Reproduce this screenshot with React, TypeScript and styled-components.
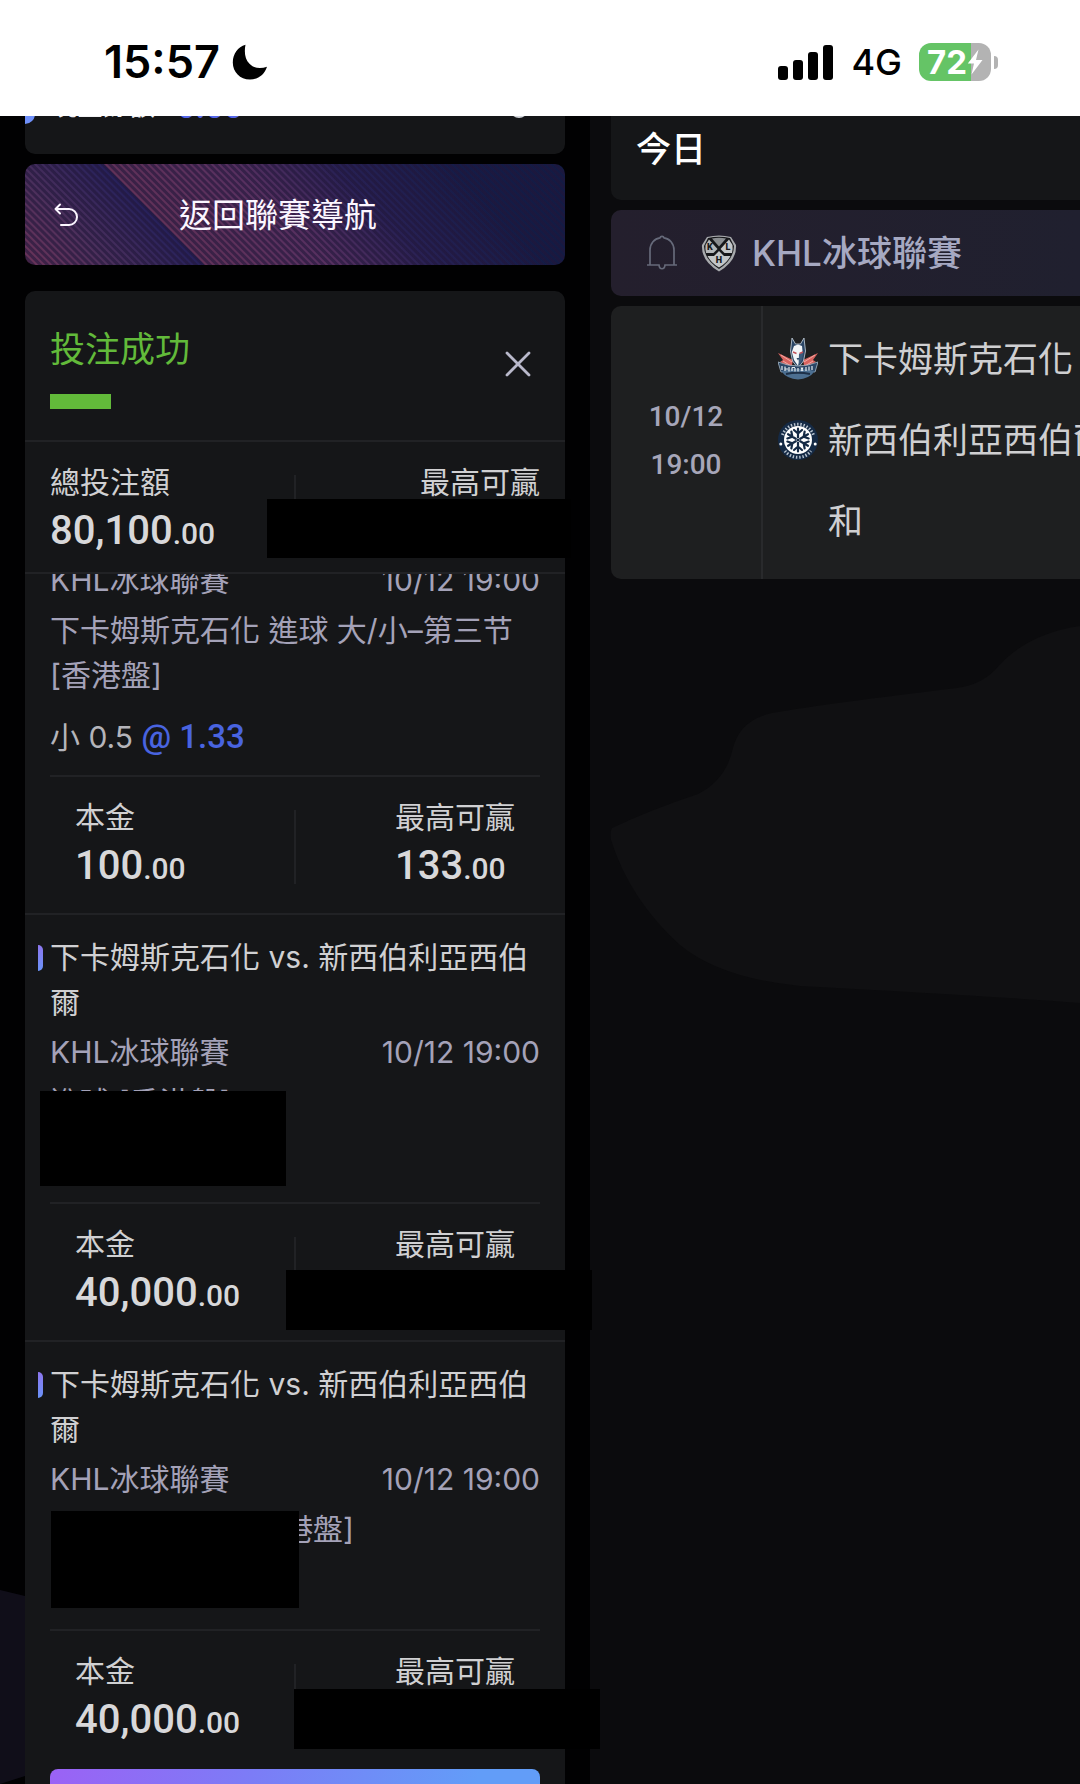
import React from "react";
import styled, { createGlobalStyle } from "styled-components";

const SANS = `Inter, "Noto Sans CJK TC", sans-serif`;
const NUM = `Roboto, "Noto Sans CJK TC", sans-serif`;

const Global = createGlobalStyle`
  *, *::before, *::after { box-sizing: border-box; }
  body { margin: 0; background: #010102; }
  h1, h2, h3, p, ul { margin: 0; padding: 0; font: inherit; }
  ul { list-style: none; }
  button { border: 0; padding: 0; background: none; font: inherit; color: inherit; cursor: pointer; }
  svg { flex: none; }
`;

const Page = styled.div`
  display: flex;
  flex-direction: column;
  height: 100vh;
  overflow: hidden;
  font-family: ${SANS};
  font-weight: 400;
  font-size: 30px;
  color: #d0d0d2;
`;

/* Status bar */
const StatusBar = styled.header`
  flex: none;
  display: flex;
  align-items: center;
  justify-content: space-between;
  height: 116px;
  padding: 8px 82px 0 104px;
  background: #fff;
  color: #000;
`;
const StatusGroup = styled.div<{ $gap: number }>`
  display: flex;
  align-items: center;
  gap: ${(p) => p.$gap}px;
`;
const Clock = styled.time`
  font-size: 45px;
  font-weight: 600;
  line-height: 48px;
`;
const Network = styled.span`
  font-size: 36px;
  font-weight: 500;
  line-height: 48px;
`;
const Battery = styled.div`
  display: flex;
  align-items: center;
  gap: 3px;
`;
const BatteryBody = styled.div`
  display: flex;
  align-items: center;
  justify-content: center;
  width: 72px;
  height: 38px;
  border-radius: 12px;
  background: linear-gradient(90deg, #65c466 72%, #b3b3b3 72%);
  color: #fff;
  font-size: 33px;
  font-weight: 700;
  line-height: 38px;
`;
const BatteryNub = styled.span`
  width: 4px;
  height: 13px;
  border-radius: 0 6px 6px 0;
  background: #b3b3b3;
`;

/* Panes */
const Main = styled.main`
  flex: 1;
  min-height: 0;
  display: grid;
  grid-template-columns: minmax(0, 59fr) minmax(0, 49fr);
`;
const SlipPane = styled.section`
  position: relative;
  z-index: 1;
  padding: 0 25px;
  background: #010102;
  min-height: 0;
`;
const MatchPane = styled.section`
  position: relative;
  overflow: hidden;
  padding-left: 21px;
  background: #0b0b0d;
  display: flex;
  flex-direction: column;
  gap: 10px;
`;
const PaneShape = styled.svg<{ $top: number }>`
  position: absolute;
  left: 0;
  top: ${(p) => p.$top}px;
  pointer-events: none;
`;

/* Balance strip, scrolled mostly out of view */
const Clip = styled.div`
  overflow: hidden;
`;
const BalanceCard = styled.div`
  position: relative;
  display: flex;
  align-items: flex-end;
  gap: 22px;
  margin-top: -40px;
  height: 78px;
  padding: 0 37px 29px 26px;
  border-radius: 0 0 10px 10px;
  background: #151618;
  overflow: hidden;
  font-size: 26px;
  line-height: 38px;
  font-weight: 500;
  color: #f2f2f4;
`;
const BalanceValue = styled.span`
  flex: 1;
  color: #5566e8;
  font-size: 33px;
  line-height: 36px;
  font-weight: 600;
  font-family: ${NUM};
`;
const BalanceDot = styled.span`
  position: absolute;
  left: -10px;
  bottom: 30px;
  width: 20px;
  height: 20px;
  border-radius: 50%;
  background: #6f90fa;
`;
const RefreshDot = styled.span`
  width: 18px;
  height: 18px;
  margin-bottom: 7px;
  border-radius: 50%;
  background: #d3d6dc;
`;

const BackButton = styled.button`
  display: flex;
  align-items: center;
  gap: 101px;
  width: 100%;
  height: 101px;
  margin-top: 10px;
  padding: 0 29px;
  border-radius: 10px;
  color: #fbf6ff;
  font-size: 33px;
  line-height: 48px;
  background:
    repeating-linear-gradient(45deg, rgba(33, 22, 58, 0.6) 0 2px, rgba(33, 22, 58, 0) 3px 4px, rgba(33, 22, 58, 0.6) 5px),
    linear-gradient(45deg, #6c3358 0, #4a2f5c 14%, #25205a 28%, #613158 28%, #573060 48%, rgba(46, 34, 88, 0.7) 64%, rgba(20, 26, 66, 0) 82%),
    linear-gradient(90deg, #1d1f55 0, #131b44 100%);
`;

/* Slip card */
const SlipCard = styled.section`
  margin-top: 26px;
  border-radius: 10px 10px 0 0;
  background: #151618;
`;
const SlipHead = styled.div`
  display: flex;
  align-items: center;
  justify-content: space-between;
  height: 149px;
  padding: 2px 34px 0 25px;
`;
const SlipTitle = styled.h1`
  color: #62ba3a;
  font-size: 35px;
  line-height: 50px;
  &::after {
    content: "";
    display: block;
    width: 61px;
    height: 15px;
    margin-top: 20px;
    background: #62ba3a;
  }
`;
const CloseButton = styled.button`
  display: flex;
  padding-bottom: 6px;
`;
const Totals = styled.div<{ $inset?: boolean }>`
  position: relative;
  display: grid;
  grid-template-columns: minmax(0, 1fr) 2px minmax(0, 1fr);
  padding: ${(p) => (p.$inset ? "20px 25px 22px" : "20px 25px 16px")};
  border-top: 2px solid #212225;
  border-bottom: ${(p) => (p.$inset ? "0" : "2px solid #212225")};
`;
const TotalsRule = styled.span`
  height: 74px;
  margin-top: 13px;
  background: #212225;
`;
const Figure = styled.div<{ $end?: boolean }>`
  display: flex;
  flex-direction: column;
  gap: 7px;
  width: max-content;
  min-width: 120px;
  min-height: 91px;
  justify-self: ${(p) => (p.$end ? "end" : "start")};
`;
const FigureLabel = styled.span`
  line-height: 40px;
`;
const Amount = styled.span`
  font-family: ${NUM};
  font-size: 40px;
  font-weight: 500;
  line-height: 44px;
  color: #d8d8da;
  small { font-size: 30px; font-weight: 500; }
`;

const TicketWindow = styled.div`
  display: flow-root;
  overflow-x: visible;
  overflow-y: clip;
`;
const TicketList = styled.ul`
  margin-top: -41px;
`;
const Ticket = styled.li`
  position: relative;
  padding-top: 20px;
  border-bottom: 2px solid #212225;
  &:last-child { border-color: transparent; }
`;
const TicketBody = styled.div`
  padding: 0 25px 16px;
  line-height: 45px;
  color: #a4a2b8;
`;
const TicketTitle = styled.h2`
  position: relative;
  color: #d0d0d2;
  &::before {
    content: "";
    position: absolute;
    left: -12px;
    top: 10px;
    width: 5px;
    height: 26px;
    border-radius: 0 5px 5px 0;
    background: linear-gradient(#8d76ee, #6a93f8);
  }
`;
const LeagueRow = styled.div`
  display: flex;
  justify-content: space-between;
  margin-top: 5px;
`;
const Market = styled.p<{ $indent?: boolean }>`
  margin-top: 5px;
  padding-left: ${(p) => (p.$indent ? "233px" : "0")};
`;
const Selection = styled.p`
  height: 45px;
  margin-top: 16px;
  color: #b4b4ba;
`;
const Odds = styled.b`
  color: #4964e0;
  font-family: ${NUM};
  font-size: 33px;
  font-weight: 500;
`;
const StakeWrap = styled.div`
  margin: 0 25px;
`;
const Redaction = styled.span<{ $x: number; $y: number; $w: number; $h: number }>`
  position: absolute;
  left: ${(p) => p.$x}px;
  top: ${(p) => p.$y}px;
  width: ${(p) => p.$w}px;
  height: ${(p) => p.$h}px;
  background: #000;
`;
const Confirm = styled.button`
  display: block;
  width: calc(100% - 50px);
  height: 88px;
  margin: 0 25px;
  border-radius: 8px;
  background: linear-gradient(100deg, #9b62f5 0, #7c7cf6 40%, #629df8 85%);
`;

/* Match pane */
const DayBar = styled.h2`
  position: relative;
  height: 84px;
  padding: 9px 25px;
  border-radius: 0 0 0 10px;
  background: #151618;
  color: #fff;
  font-size: 35px;
  font-weight: 500;
  line-height: 48px;
`;
const LeagueBar = styled.div`
  position: relative;
  display: flex;
  align-items: center;
  height: 86px;
  padding-left: 36px;
  border-radius: 10px 0 0 10px;
  background: linear-gradient(90deg, #241f2d, #20202f);
  color: #a6a9c2;
  font-size: 35px;
  font-weight: 500;
  white-space: nowrap;
`;
const BellButton = styled.button`
  display: flex;
  margin-right: 24px;
`;
const LeagueName = styled.h3`
  margin-left: 15px;
  line-height: 48px;
`;
const MatchCard = styled.article`
  position: relative;
  display: grid;
  grid-template-columns: 150px minmax(0, 1fr);
  border-radius: 10px 0 0 10px;
  background: #1e1f20;
`;
const Kickoff = styled.time`
  display: flex;
  flex-direction: column;
  justify-content: center;
  align-items: center;
  padding-bottom: 4px;
  font-family: ${NUM};
  font-size: 28px;
  font-weight: 500;
  line-height: 48px;
  color: #a6a6b9;
`;
const Teams = styled.div`
  padding: 12px 0 18px 15px;
  border-left: 2px solid #292a2c;
`;
const Team = styled.div`
  display: grid;
  grid-template-columns: 40px max-content;
  column-gap: 10px;
  align-items: center;
  height: 81px;
  font-size: 35px;
  line-height: 48px;
  color: #cfcfd1;
`;
const TeamName = styled.span`
  grid-column: 2;
`;

const Moon = () => (
  <svg width="36" height="36" viewBox="0 0 36 36" aria-hidden="true">
    <path d="M13.500 .8C12 8 13 15.500 17.500 19.800C22 24.500 28.500 25 35 22.800C32.500 30.800 26 35.500 18 35.500C8 35.500 .8 28 .8 18.500C.8 10 5.800 3 13.500 .8Z" fill="#000" />
  </svg>
);
const Signal = () => (
  <svg width="56" height="35" viewBox="0 0 56 35" aria-hidden="true">
    <rect x="0" y="21" width="10" height="14" rx="3" />
    <rect x="15" y="15" width="10" height="20" rx="3" />
    <rect x="30" y="7" width="10" height="28" rx="3" />
    <rect x="45" y="0" width="10" height="35" rx="3" />
  </svg>
);
const Bolt = () => (
  <svg width="16" height="26" viewBox="0 0 16 26" aria-hidden="true">
    <path d="M11.500 .5L.8 14.500H7L4.500 25.500L15.500 11H9Z" fill="#fff" />
  </svg>
);
const Undo = () => (
  <svg width="24" height="24" viewBox="0 0 24 24" fill="none" stroke="currentColor" strokeWidth="2" strokeLinecap="round" strokeLinejoin="round" aria-hidden="true">
    <path d="M6 1.500L1.500 6L6 10.500M1.500 6H15A8 8 0 0 1 15 22H7" />
  </svg>
);
const Cross = () => (
  <svg width="26" height="26" viewBox="0 0 26 26" stroke="#b9b9cb" strokeWidth="2.800" strokeLinecap="round" aria-hidden="true">
    <path d="M2 2L24 24M24 2L2 24" />
  </svg>
);
const Bell = () => (
  <svg width="30" height="36" viewBox="0 0 30 36" fill="none" stroke="#666a7a" strokeWidth="1.700" aria-hidden="true">
    <path d="M3 29.500V15C3 8.500 7.500 3.500 13 2.800C13.500 1 16.500 1 17 2.800C22.500 3.500 27 8.500 27 15V29.500M0 30H12C12.500 35 17.500 35 18 30H30" />
  </svg>
);
const KhlShield = () => (
  <svg width="36" height="37" viewBox="0 0 36 37" fontFamily="Roboto, sans-serif" fontWeight="900" fontSize="9" textAnchor="middle" role="img" aria-label="KHL">
    <path d="M6 2Q18 -1 30 2L35 10Q36 26 18 36.500Q0 26 1 10Z" fill="#a9abae" />
    <path d="M7 3Q18 .5 29 3L33 11Q33 24 18 34Q3 24 3 11Z" fill="#16171a" />
    <path d="M8 4.500L16.500 14L12.500 18H5Q4 14 4.500 10Z" fill="#b4b7b9" />
    <path d="M28 4.500L19.500 14L23.500 18H31Q32 14 31.500 10Z" fill="#c3c6c8" />
    <path d="M11 3.500L18 11.500L25 3.500Q18 2 11 3.500Z" fill="#8b8e91" />
    <path d="M6.500 21H13L18 16L23 21H29.500Q26 28 18 32.500Q10 28 6.500 21Z" fill="#c3c6c8" />
    <text x="9" y="15" fill="#16171a">K</text>
    <text x="27" y="15" fill="#16171a">L</text>
    <text x="18" y="28" fill="#16171a">H</text>
  </svg>
);
const WolfCrest = () => (
  <svg width="40" height="42" viewBox="0 0 40 42" role="img" aria-label="下卡姆斯克石化">
    <path d="M0 15L15 22L13 32L5 30L7 26L2 24L5 22Z" fill="#d9635f" />
    <path d="M40 15L25 22L27 32L35 30L33 26L38 24L35 22Z" fill="#d9635f" />
    <path d="M3 17L14 24M37 17L26 24M5 23L13 28M35 23L27 28" stroke="#f0aaa4" strokeWidth="1" />
    <path d="M14 0L17.500 6H22.500L26 0L27.500 13L25.500 23L20 30L14.500 23L12.500 13Z" fill="#2b4666" stroke="#c9d6e0" strokeWidth=".8" />
    <path d="M16 8L20 6.500L24 8L24.500 13L22 22L20 28L16 22L13.800 14Z" fill="#f2f5f7" />
    <path d="M21 16L25.500 13L24 22L20.500 28Z" fill="#3d5c7c" />
    <path d="M15 14L18.500 15.500M21.500 15.500L25 14" stroke="#c05058" strokeWidth="1.400" />
    <path d="M18.500 20H21.500L20 22.500Z" fill="#2b4666" />
    <path d="M0 24Q20 32 40 24L37 34Q20 30 3 34Z" fill="#2b4666" stroke="#a9bccb" strokeWidth=".8" />
    <path d="M3 33Q20 29 37 33Q31 41 20 41.500Q9 41 3 33Z" fill="#4c6f91" />
    <path d="M8 36Q20 33.500 32 36" stroke="#1d3048" strokeWidth="2" fill="none" />
    <path d="M4 28V32M7 28.500V33M7 31H10M11 29V33.500M14 29.500V33M14 29.500H17M17 30V33.500M20 30V33.500M23 29.500L25 33M25 29.500L23 33M28 29V33M31 28.500V32.500M34 28V32" stroke="#e6edf2" strokeWidth="1.200" />
  </svg>
);
const SnowCrest = () => (
  <svg width="40" height="40" viewBox="0 0 40 40" role="img" aria-label="新西伯利亞西伯爾">
    <circle cx="20" cy="20" r="20" fill="#152a45" />
    <path d="M4.500 15A16.500 16.500 0 0 1 35.500 15" fill="none" stroke="#b9c4d0" strokeWidth="3" strokeDasharray="1.400 1.800" />
    <path d="M7 31A16.500 16.500 0 0 0 33 31" fill="none" stroke="#b9c4d0" strokeWidth="3" strokeDasharray="1.400 1.800" />
    <circle cx="20" cy="20" r="14" fill="#fff" />
    <circle cx="2.800" cy="24" r="1.500" fill="#fff" />
    <circle cx="37.200" cy="24" r="1.500" fill="#fff" />
    {[0, 60, 120, 180, 240, 300].map((angle) => (
      <path key={angle} transform={`rotate(${angle} 20 20)`} d="M20 17.500V8.500M20 13.500L16 10M20 13.500L24 10" stroke="#152a45" strokeWidth="2.200" strokeLinecap="round" fill="none" />
    ))}
    <circle cx="20" cy="20" r="1.300" fill="#152a45" />
  </svg>
);

const Money = ({ whole }: { whole: string }) => (
  <Amount>
    {whole}
    <small>.00</small>
  </Amount>
);

type Box = [number, number, number, number];
type TicketData = {
  title?: string;
  market: string;
  indent?: boolean;
  pick?: string;
  odds?: string;
  stake: string;
  win?: string;
  masks: Box[];
};

const FIXTURE = "下卡姆斯克石化 vs. 新西伯利亞西伯爾";

const tickets: TicketData[] = [
  { market: "下卡姆斯克石化 進球 大/小–第三节 [香港盤]", pick: "小 0.5", odds: "@ 1.33", stake: "100", win: "133", masks: [] },
  { title: FIXTURE, market: "進球 [香港盤]", stake: "40,000", masks: [[15, 176, 246, 95], [261, 355, 306, 60]] },
  { title: FIXTURE, market: "港盤]", indent: true, stake: "40,000", masks: [[26, 169, 248, 97], [269, 347, 306, 60]] },
];

const Mask = ({ box: [x, y, w, h] }: { box: Box }) => <Redaction $x={x} $y={y} $w={w} $h={h} />;

export default function App() {
  return (
    <Page lang="zh-Hant">
      <Global />
      <StatusBar>
        <StatusGroup $gap={12}>
          <Clock>15:57</Clock>
          <Moon />
        </StatusGroup>
        <StatusGroup $gap={17}>
          <Signal />
          <Network>4G</Network>
          <Battery>
            <BatteryBody>
              72
              <Bolt />
            </BatteryBody>
            <BatteryNub />
          </Battery>
        </StatusGroup>
      </StatusBar>

      <Main>
        <SlipPane>
          <PaneShape $top={1474} width="25" height="194" viewBox="0 0 25 194" aria-hidden="true">
            <path d="M0 0L25 6V186L0 194Z" fill="#100e19" />
          </PaneShape>
          <Clip>
            <BalanceCard>
              <BalanceDot />
              <span>現金餘額</span>
              <BalanceValue>0.00</BalanceValue>
              <RefreshDot />
            </BalanceCard>
          </Clip>
          <BackButton type="button">
            <Undo />
            返回聯賽導航
          </BackButton>

          <SlipCard>
            <SlipHead>
              <SlipTitle>投注成功</SlipTitle>
              <CloseButton type="button" aria-label="關閉">
                <Cross />
              </CloseButton>
            </SlipHead>
            <Totals>
              <Figure>
                <FigureLabel>總投注額</FigureLabel>
                <Money whole="80,100" />
              </Figure>
              <TotalsRule />
              <Figure $end>
                <FigureLabel>最高可贏</FigureLabel>
              </Figure>
              <Mask box={[242, 57, 304, 59]} />
            </Totals>
            <TicketWindow>
              <TicketList>
                {tickets.map((t, i) => (
                  <Ticket key={i}>
                    <TicketBody>
                      {t.title && <TicketTitle>{t.title}</TicketTitle>}
                      <LeagueRow>
                        <span>KHL冰球聯賽</span>
                        <time>10/12 19:00</time>
                      </LeagueRow>
                      <Market $indent={t.indent}>{t.market}</Market>
                      <Selection>
                        {t.pick} {t.odds && <Odds>{t.odds}</Odds>}
                      </Selection>
                    </TicketBody>
                    <StakeWrap>
                      <Totals $inset>
                        <Figure>
                          <FigureLabel>本金</FigureLabel>
                          <Money whole={t.stake} />
                        </Figure>
                        <TotalsRule />
                        <Figure $end>
                          <FigureLabel>最高可贏</FigureLabel>
                          {t.win && <Money whole={t.win} />}
                        </Figure>
                      </Totals>
                    </StakeWrap>
                    {t.masks.map((box, k) => (
                      <Mask key={k} box={box} />
                    ))}
                  </Ticket>
                ))}
              </TicketList>
              <Confirm type="button" aria-label="確定" />
            </TicketWindow>
          </SlipCard>
        </SlipPane>

        <MatchPane>
          <PaneShape $top={504} width="490" height="390" viewBox="0 0 490 390" aria-hidden="true">
            <path d="M22 208Q60 190 108 174Q136 160 143 128Q150 100 182 93Q240 83 367 68Q390 65 405 50Q435 14 490 6V383Q400 376 210 366Q130 358 90 325Q40 280 21 220Q20 211 22 208Z" fill="#101012" />
          </PaneShape>
          <DayBar>今日</DayBar>
          <LeagueBar>
            <BellButton type="button" aria-label="提醒">
              <Bell />
            </BellButton>
            <KhlShield />
            <LeagueName>KHL冰球聯賽</LeagueName>
          </LeagueBar>
          <MatchCard>
            <Kickoff>
              <span>10/12</span>
              <span>19:00</span>
            </Kickoff>
            <Teams>
              <Team>
                <WolfCrest />
                <TeamName>下卡姆斯克石化</TeamName>
              </Team>
              <Team>
                <SnowCrest />
                <TeamName>新西伯利亞西伯爾</TeamName>
              </Team>
              <Team>
                <TeamName>和</TeamName>
              </Team>
            </Teams>
          </MatchCard>
        </MatchPane>
      </Main>
    </Page>
  );
}
